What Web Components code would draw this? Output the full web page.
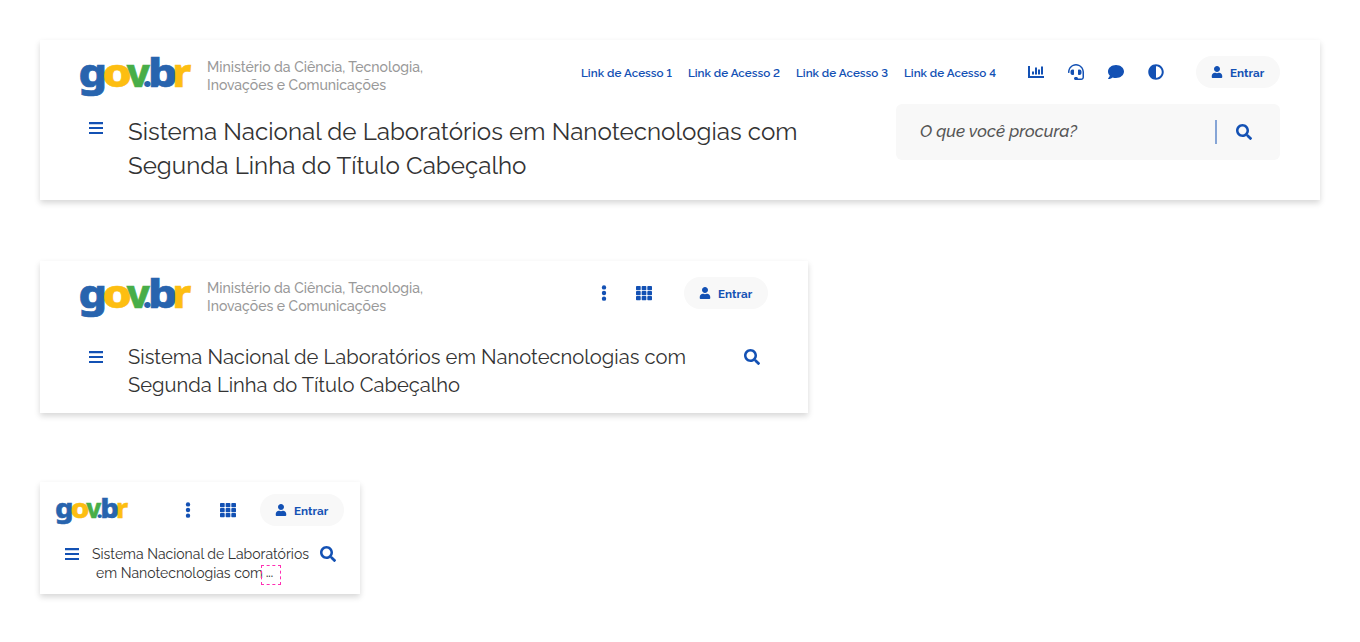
<!DOCTYPE html>
<html lang="pt-BR">
<head>
<meta charset="utf-8">
<title>Header gov.br</title>
<style>
body{margin:0;background:#fff;font-family:Raleway,Lato,sans-serif;font-feature-settings:"lnum";color:#333;width:1360px;height:642px;overflow:hidden}
main{display:flex;flex-direction:column;align-items:flex-start;padding:40px 40px 0}
br-header.tablet{margin-top:61px}
br-header.mobile{margin-top:69px}
</style>
</head>
<body>
<main>
  <br-header class="desktop" size="desktop"></br-header>
  <br-header class="tablet" size="tablet"></br-header>
  <br-header class="mobile" size="mobile"></br-header>
</main>
<script>
const ICONS={
  menu:'<path d="M32 64h448v68H32zM32 222h448v68H32zM32 380h448v68H32z"/>',
  search:'<path d="M505 442.7L405.3 343c-4.5-4.5-10.6-7-17-7H372c27.600-35.300 44-79.700 44-128C416 93.100 322.900 0 208 0S0 93.100 0 208s93.100 208 208 208c48.300 0 92.700-16.400 128-44v16.300c0 6.400 2.500 12.500 7 17l99.700 99.700c9.400 9.400 24.600 9.400 33.900 0l28.300-28.300c9.400-9.400 9.400-24.600.1-34zM208 336c-70.700 0-128-57.200-128-128 0-70.700 57.200-128 128-128 70.700 0 128 57.200 128 128 0 70.700-57.200 128-128 128z"/>',
  chart:'<path d="M0 64h64v320h448v64H0zM128 240h64v96h-64zM224 112h64v224h-64zM320 176h64v160h-64zM416 80h64v256h-64z"/>',
  headset:'<path d="M192 208c0-17.670-14.330-32-32-32h-16c-35.350 0-64 28.650-64 64v48c0 35.350 28.650 64 64 64h16c17.670 0 32-14.330 32-32V208zm176 144c35.350 0 64-28.650 64-64v-48c0-35.350-28.650-64-64-64h-16c-17.670 0-32 14.330-32 32v112c0 17.670 14.330 32 32 32h16zM256 0C113.180 0 4.580 118.830 0 256v16c0 8.840 7.160 16 16 16h16c8.840 0 16-7.160 16-16v-16c0-114.690 93.310-208 208-208s208 93.310 208 208h-.12c.08 2.430.12 165.720.12 165.720 0 23.350-18.930 42.280-42.280 42.280H320c0-26.510-21.490-48-48-48h-32c-26.510 0-48 21.490-48 48s21.490 48 48 48h181.720c49.860 0 90.280-40.420 90.280-90.280V256C507.400 118.830 398.820 0 256 0z"/>',
  comment:'<path d="M256 32C114.600 32 0 125.100 0 240c0 49.600 21.400 95 57 130.700C44.500 421.100 2.700 466 2.200 466.500c-2.200 2.300-2.800 5.700-1.500 8.700S4.800 480 8 480c66.300 0 116-31.800 140.600-51.400 32.700 12.300 69 19.400 107.400 19.400 141.400 0 256-93.100 256-208S397.400 32 256 32z"/>',
  contrast:'<path d="M8 256c0 136.966 111.033 248 248 248s248-111.034 248-248S392.966 8 256 8 8 119.033 8 256zm248 184V72c101.705 0 184 82.311 184 184 0 101.705-82.311 184-184 184z"/>',
  more:'<circle cx="256" cy="76" r="70"/><circle cx="256" cy="256" r="70"/><circle cx="256" cy="436" r="70"/>',
  grid:[32,192,352].map(y=>[0,181,362].map(x=>`<rect x="${x}" y="${y}" width="150" height="136" rx="24"/>`).join('')).join(''),
  user:'<path transform="translate(32)" d="M224 256c70.700 0 128-57.300 128-128S294.700 0 224 0 96 57.300 96 128s57.300 128 128 128zm89.600 32h-16.700c-22.200 10.200-46.900 16-72.900 16s-50.600-5.800-72.900-16h-16.700C60.200 288 0 348.200 0 422.400V464c0 26.500 21.500 48 48 48h352c26.500 0 48-21.500 48-48v-41.600c0-74.200-60.200-134.400-134.400-134.400z"/>'
};

class BrIcon extends HTMLElement{
  connectedCallback(){
    const s=this.getAttribute('size')||16;
    this.attachShadow({mode:'open'}).innerHTML=`<style>:host{display:block;flex:none;width:${s}px;height:${s}px;color:#1351b4}svg{display:block}</style>
      <svg width="${s}" height="${s}" viewBox="0 0 512 512" fill="currentColor">${ICONS[this.getAttribute('name')]}</svg>`;
  }
}
customElements.define('br-icon',BrIcon);

/* One line of text whose tracking is adjusted to fill the given width. */
class FitLine extends HTMLElement{
  connectedCallback(){
    this.attachShadow({mode:'open'}).innerHTML=`<style>:host{display:block;white-space:nowrap;width:${this.getAttribute('width')}px}</style><span><slot></slot></span>`;
    const span=this.shadowRoot.querySelector('span');
    const gap=+this.getAttribute('width')-span.getBoundingClientRect().width;
    span.style.letterSpacing=gap/this.textContent.length+'px';
  }
}
customElements.define('fit-line',FitLine);

class BrLogo extends HTMLElement{
  connectedCallback(){
    const w=+this.getAttribute('width')||111;
    this.attachShadow({mode:'open'}).innerHTML=`<style>:host{display:block;flex:none;width:${w}px;height:${w*40/111}px}svg{display:block;overflow:visible}text{font:800 40px "Noto Sans",sans-serif;stroke-width:.7px}.b{fill:#2864ae;stroke:#2864ae}.y{fill:#fdbe11;stroke:#fdbe11}.g{fill:#48ae48;stroke:#48ae48}.dot{font-size:34px;stroke-width:0}</style>
      <svg width="${w}" height="${w*40/111}" viewBox="0 0 111 40" role="img" aria-label="gov.br">
      <text class="b" y="30.700" x="-1.400" textLength="28.600" lengthAdjust="spacingAndGlyphs">g</text>
      <text class="y" y="30.700" x="22.500" textLength="29.400" lengthAdjust="spacingAndGlyphs">o</text>
      <text class="g" y="30.700" x="46.800" textLength="23.100" lengthAdjust="spacingAndGlyphs">v</text>
      <text class="b dot" y="30.700" x="62.400">.</text>
      <text class="b" y="30.700" x="68.100" textLength="29.400" lengthAdjust="spacingAndGlyphs">b</text>
      <text class="y" y="30.700" x="92.500" textLength="18.800" lengthAdjust="spacingAndGlyphs">r</text></svg>`;
  }
}
customElements.define('br-logo',BrLogo);

class BrSignIn extends HTMLElement{
  connectedCallback(){
    this.attachShadow({mode:'open'}).innerHTML=`<style>
      :host{display:flex;flex:none;align-items:center;box-sizing:border-box;width:84px;height:32px;padding:0 15px;border-radius:16px;background:#f8f8f8;color:#1351b4;font-size:11.670px;line-height:18px;font-weight:700}
      fit-line{margin:2px 0 0 7px}</style><br-icon name="user" size="12"></br-icon><fit-line width="34.200">${this.textContent}</fit-line>`;
  }
}
customElements.define('br-sign-in',BrSignIn);

class BrSearch extends HTMLElement{
  connectedCallback(){
    this.attachShadow({mode:'open'}).innerHTML=`<style>
      :host{display:flex;flex:none;align-items:center;box-sizing:border-box;width:384px;height:56px;padding:0 28px 0 24px;border-radius:6px;background:#f8f8f8;color:#555}
      fit-line{font-style:italic;font-weight:500;font-size:16.800px;line-height:24px;margin:0 auto 2px 0}
      i{width:2px;height:24px;background:#1351b4;opacity:.5;margin-right:19px}</style>
      <fit-line width="157">O que você procura?</fit-line><i></i><br-icon name="search"></br-icon>`;
  }
}
customElements.define('br-search',BrSearch);

const MINISTRY='<div class="ministry"><fit-line width="216">Ministério da Ciência, Tecnologia,</fit-line><fit-line width="179">Inovações e Comunicações</fit-line></div>';
const icons=names=>`<div class="icons">${names.map(n=>`<br-icon name="${n}"></br-icon>`).join('')}</div>`;
const VIEWS={
  desktop:`<div class="top"><br-logo></br-logo>${MINISTRY}
    <nav>${[91,92,92,92].map((w,i)=>`<fit-line width="${w}">Link de Acesso ${i+1}</fit-line>`).join('')}</nav>
    ${icons(['chart','headset','comment','contrast'])}<br-sign-in>Entrar</br-sign-in></div>
    <div class="bottom"><br-icon class="menu" name="menu"></br-icon>
    <div class="title"><fit-line width="669.500">Sistema Nacional de Laboratórios em Nanotecnologias com</fit-line><fit-line width="398.500">Segunda Linha do Título Cabeçalho</fit-line></div><br-search></br-search></div>`,
  tablet:`<div class="top"><br-logo></br-logo>${MINISTRY}${icons(['more','grid'])}<br-sign-in>Entrar</br-sign-in></div>
    <div class="bottom"><br-icon class="menu" name="menu"></br-icon>
    <div class="title"><fit-line width="558">Sistema Nacional de Laboratórios em Nanotecnologias com</fit-line><fit-line width="332">Segunda Linha do Título Cabeçalho</fit-line></div><br-icon class="find" name="search"></br-icon></div>`,
  mobile:`<div class="top"><br-logo width="72"></br-logo>${icons(['more','grid'])}<br-sign-in>Entrar</br-sign-in></div>
    <div class="bottom"><br-icon class="menu" name="menu"></br-icon>
    <div class="title"><fit-line width="217">Sistema Nacional de Laboratórios</fit-line><div class="last"><fit-line width="167">em Nanotecnologias com</fit-line><span class="cut">...</span></div></div><br-icon class="find" name="search"></br-icon></div>`
};
class BrHeader extends HTMLElement{
  connectedCallback(){
    this.attachShadow({mode:'open'}).innerHTML=`<style>
      :host{display:flex;flex-direction:column;box-sizing:border-box;background:#fff;box-shadow:0 3px 6px rgba(0,0,0,.16)}
      :host([size=desktop]){width:1280px;height:160px;padding:16px 40px}
      :host([size=tablet]){width:768px;height:152px;padding:16px 40px}
      :host([size=mobile]){width:320px;height:112px;padding:12px 16px}
      .top,.bottom{display:flex;flex:none;align-items:flex-start}
      .top{height:48px}
      .ministry{margin:2px 0 0 16px;font-size:14px;line-height:18px;font-weight:500;color:#999}
      nav{display:flex;gap:16px;margin-left:auto;padding-top:8px;color:#1351b4;font-size:11.670px;line-height:18px;font-weight:600}
      .icons{display:flex;gap:24px;margin:8px 32px 0 auto}
      nav+.icons{margin-left:32px}
      .title{margin-left:24px;font-size:24.160px;line-height:34px;padding-top:11px}
      .menu{margin:16px 0 0 8px}
      br-search{margin-left:auto}
      .find{margin:6px 8px 0 auto}
      :host([size=tablet]) .title{font-size:20.160px;line-height:28px;padding-top:0}
      :host([size=tablet]) .bottom{margin-top:18px}
      :host([size=tablet]) .menu{margin-top:6px}
      :host([size=mobile]) br-logo{margin-top:4px}
      :host([size=mobile]) .icons{margin-right:24px}
      :host([size=mobile]) .bottom{margin-top:3px}
      :host([size=mobile]) .title{margin-left:12px;font-size:14px;line-height:19px;padding-top:0}
      :host([size=mobile]) .menu,:host([size=mobile]) .find{margin-top:1px}
      .last{display:flex;padding-left:4px}
      .cut{box-sizing:border-box;width:20px;height:20px;margin:1px 0 0 -2px;border:1px dashed #ff2fb3;font-size:11px;font-weight:600;line-height:16px;padding-left:4px}
    </style>${VIEWS[this.getAttribute('size')]}`;
  }
}
customElements.define('br-header',BrHeader);
</script>
</body>
</html>
